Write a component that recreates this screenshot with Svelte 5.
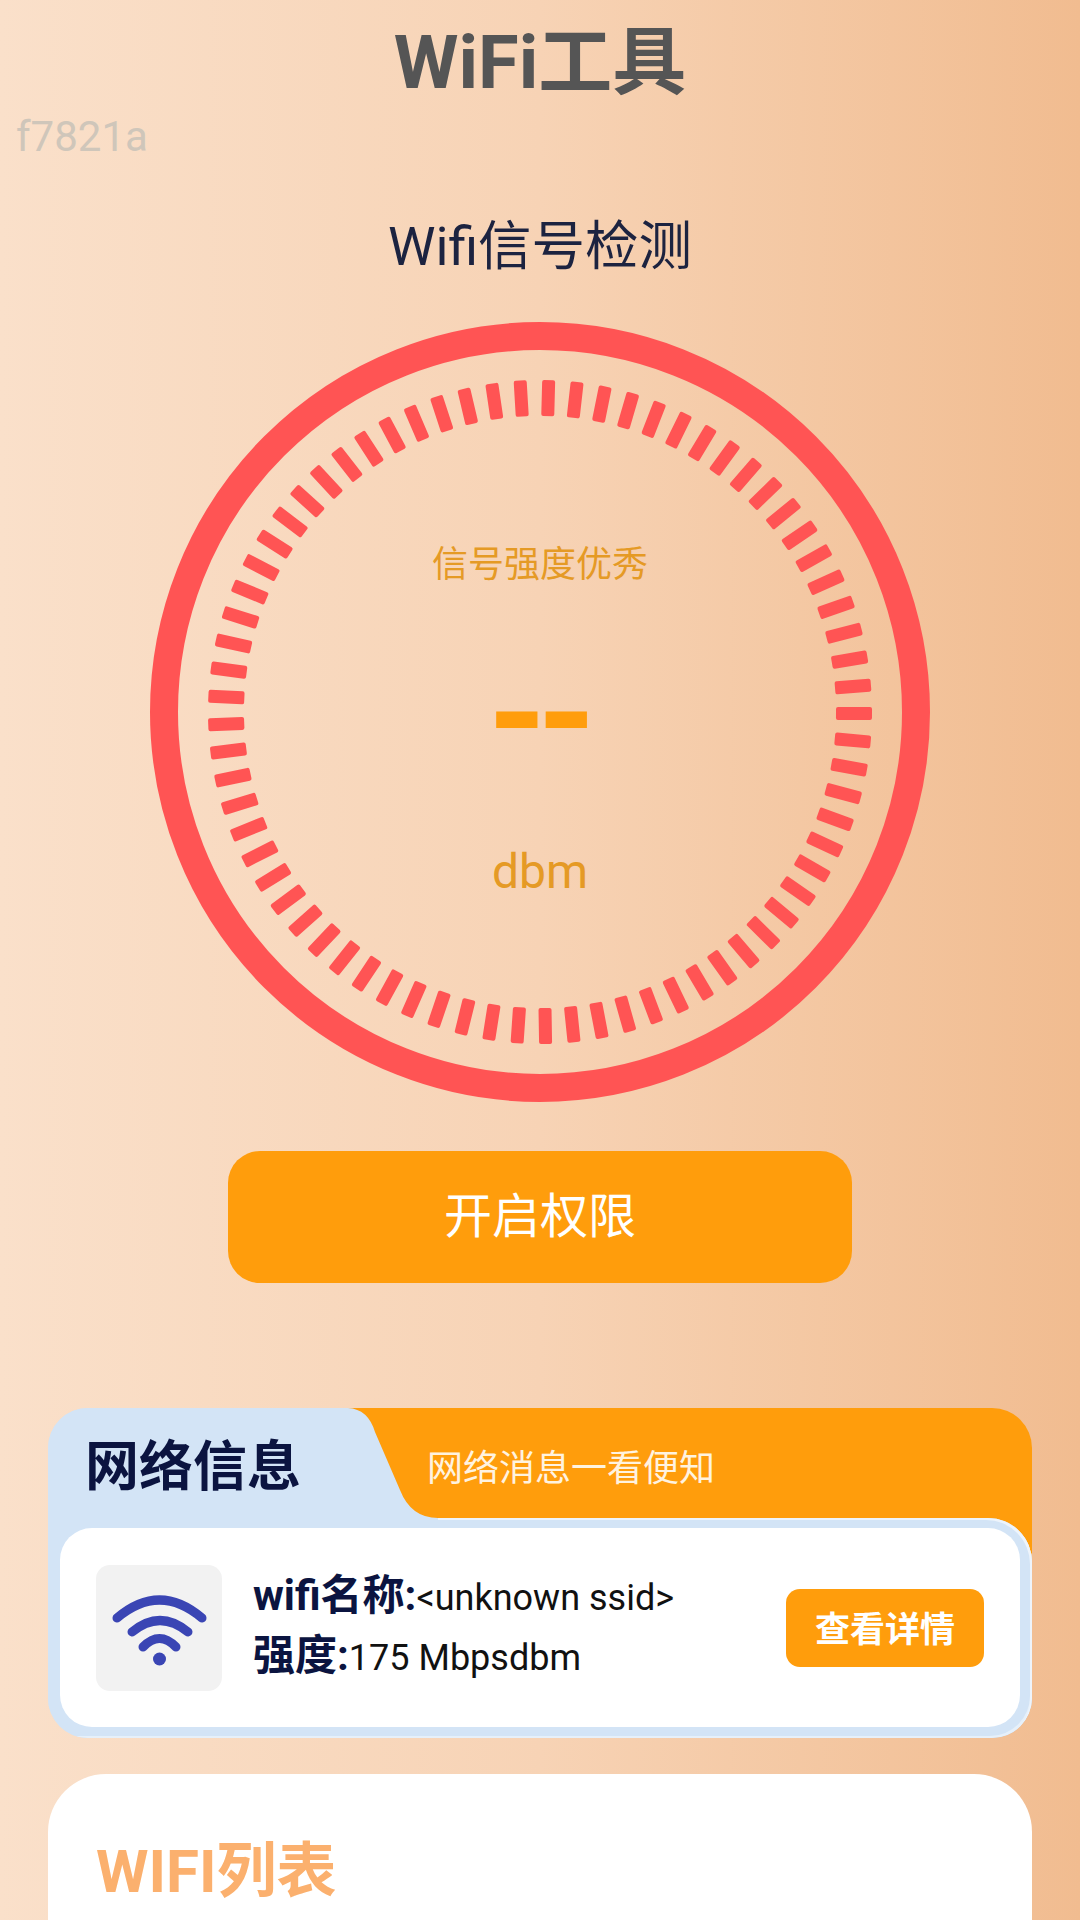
<script lang="ts">
  // the dial has an odd number of ticks, so opposite sides don't line up
  const ticks = Array.from({ length: 73 }, (_, i) => (i * 360) / 73 + 1.5);
</script>

<div class="page">
  <h1>WiFi工具</h1>
  <div class="tag">f7821a</div>
  <h2>Wifi信号检测</h2>

  <div class="gauge">
    <svg class="dial" viewBox="0 0 780 780">
      <circle cx="390" cy="390" r="376" fill="none" stroke="#ff5454" stroke-width="28" />
      {#each ticks as a}
        <rect x="383.5" y="58" width="13" height="36" rx="2" fill="#ff5454" transform="rotate({a} 390 390)" />
      {/each}
    </svg>
    <div class="readout">
      <div class="label">信号强度优秀</div>
      <div class="value">––</div>
      <div class="unit">dbm</div>
    </div>
  </div>

  <button class="primary"><span>开启权限</span></button>

  <section class="card">
    <div class="head">
      <div class="tab">网络信息</div>
      <svg class="slant" width="90" height="112" viewBox="0 0 90 112">
        <path d="M0 0 Q20 1 27 24 L52 82 Q63 110 90 110 L90 112 L0 112 Z" fill="#d3e4f6" />
      </svg>
      <div class="sub">网络消息一看便知</div>
    </div>
    <div class="panel">
      <div class="row">
        <div class="icon">
          <svg width="126" height="126" viewBox="0 0 126 126" fill="none" stroke="#3a45b4" stroke-width="9" stroke-linecap="round">
            <path d="M21 53 Q63.5 17 106 53" />
            <path d="M36 67 Q64 44 92 67" />
            <path d="M47 82 Q63.5 65 80 82" />
            <circle cx="63.5" cy="94" r="6.5" fill="#3a45b4" stroke="none" />
          </svg>
        </div>
        <div class="info">
          <div class="line-name"><b>wifi名称:</b>&lt;unknown ssid&gt;</div>
          <div><b>强度:</b>175 Mbpsdbm</div>
        </div>
        <button class="detail">查看详情</button>
      </div>
    </div>
  </section>

  <section class="list">
    <h3>WIFI列表</h3>
  </section>
</div>

<style>
  :global(body) {
    margin: 0;
  }

  .page {
    width: 1080px;
    height: 1920px;
    overflow: hidden;
    background: linear-gradient(90deg, #fae0ca 0%, #f7d3b5 50%, #f1bc90 100%);
    font-family: Roboto, "Noto Sans CJK SC", sans-serif;
  }

  h1 {
    margin: 0;
    padding-top: 9px;
    font-size: 74px;
    line-height: 108px;
    font-weight: 700;
    color: #555555;
    text-align: center;
  }

  .tag {
    padding-left: 16px;
    font-size: 42px;
    line-height: 40px;
    color: #cfc6ba;
  }

  h2 {
    margin: 58px 0 0;
    font-size: 53.5px;
    line-height: 64px;
    font-weight: 400;
    color: #1c2340;
    text-align: center;
  }

  .gauge {
    display: grid;
    width: 780px;
    height: 780px;
    margin: 43px auto 0;
  }

  .dial,
  .readout {
    grid-area: 1 / 1;
  }

  .readout {
    display: flex;
    flex-direction: column;
    align-items: center;
    padding-top: 218px;
    color: #e59a25;
  }

  .label {
    font-size: 36px;
    line-height: 50px;
  }

  .value {
    margin-top: 81px;
    font-size: 80px;
    line-height: 100px;
    font-weight: 900;
    color: #ff9d0c;
    transform: scaleY(1.6);
  }

  .unit {
    margin-top: 71px;
    font-size: 48px;
    line-height: 60px;
  }

  .primary {
    display: block;
    width: 624px;
    height: 132px;
    margin: 49px auto 0;
    padding: 0 0 10px;
    border: none;
    border-radius: 32px;
    background: #ff9d0c;
    color: #ffffff;
    font-family: inherit;
    font-size: 48px;
  }

  .card {
    width: 984px;
    height: 330px;
    margin: 125px auto 0;
    border-radius: 40px;
    overflow: hidden;
    background:
      linear-gradient(90deg, #d3e4f6 300px, transparent 300px),
      linear-gradient(#ff9d0c 170px, #d3e4f6 170px);
  }

  .head {
    position: relative;
    z-index: 1;
    display: flex;
    height: 112px;
    margin-bottom: -2px;
  }

  .tab {
    width: 263px;
    padding-left: 37px;
    background: #d3e4f6;
    color: #0b1440;
    font-size: 54px;
    font-weight: 700;
    line-height: 119px;
  }

  .slant {
    flex: none;
  }

  .sub {
    margin-left: -11px;
    color: #fff3e0;
    font-size: 36px;
    line-height: 123px;
  }

  .panel {
    box-sizing: border-box;
    height: 220px;
    padding: 10px 12px 11px;
    border-radius: 0 44px 40px 0;
    background: #d3e4f6;
    box-shadow: inset -2px 2px 0 #eef4fb, inset -2px -2px 0 #e6f0fa;
  }

  .row {
    display: flex;
    align-items: center;
    height: 199px;
    padding: 0 36px;
    border-radius: 32px;
    background: #ffffff;
  }

  .icon {
    width: 126px;
    height: 126px;
    border-radius: 14px;
    background: #f2f2f2;
  }

  .icon svg {
    display: block;
  }

  .info {
    flex: 1;
    margin: -3px 0 0 31px;
    color: #111111;
    font-size: 36px;
    line-height: 60px;
  }

  .line-name {
    padding-top: 2px;
    margin-bottom: -2px;
  }

  .info b {
    font-size: 42px;
    color: #0b1440;
  }

  .detail {
    width: 198px;
    height: 78px;
    padding: 0 0 2px;
    border: none;
    border-radius: 14px;
    background: #ff9d0c;
    color: #ffffff;
    font-family: inherit;
    font-size: 35px;
    font-weight: 700;
  }

  .list {
    width: 984px;
    height: 400px;
    margin: 36px auto 0;
    border-radius: 58px;
    background: #ffffff;
  }

  h3 {
    margin: 0;
    padding: 60px 0 0 48px;
    font-size: 60px;
    line-height: 76px;
    font-weight: 700;
    color: #fbb06e;
  }
</style>
